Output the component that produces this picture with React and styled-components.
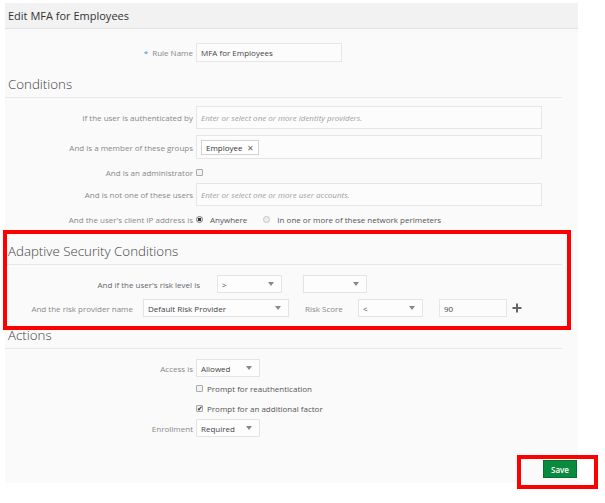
import styled, { createGlobalStyle } from "styled-components";

const GlobalStyle = createGlobalStyle`
  body {
    margin: 0;
    background: #ffffff;
    font-family: "Open Sans", "Noto Sans", sans-serif;
  }
`;

const Page = styled.div`
  position: relative;
  width: 605px;
  height: 503px;
  padding: 3px 0 0 5px;
  box-sizing: border-box;
`;

const Panel = styled.div`
  width: 573px;
  height: 480px;
  background: #fafafa;
  display: flex;
  flex-direction: column;
`;

const Header = styled.div`
  height: 25px;
  background: #f2f2f2;
  border-bottom: 1px solid #e2e2e2;
  display: flex;
  align-items: center;
  padding-left: 3px;
  font-size: 11px;
  color: #333;
`;

const Heading = styled.div`
  box-sizing: border-box;
  width: 557px;
  height: ${(p) => p.$h || 26}px;
  margin-top: ${(p) => p.$mt || 0}px;
  padding-left: 3px;
  border-bottom: 1px solid #e8e8e8;
  display: flex;
  align-items: center;
  font-size: 13.3px;
  font-weight: 300;
  color: #444;
`;

const FormRow = styled.div`
  display: grid;
  grid-template-columns: 188px 1fr;
  column-gap: 3px;
  align-items: center;
  margin-top: ${(p) => p.$mt || 0}px;
  height: ${(p) => p.$h || 19}px;
`;

const Label = styled.span`
  text-align: right;
  font-size: 8px;
  color: #888;
  white-space: nowrap;
`;

const Required = styled.span`
  color: #3a8bd0;
  margin-right: 4px;
`;

const TextBox = styled.div`
  box-sizing: border-box;
  width: ${(p) => p.$w}px;
  height: ${(p) => p.$h || 19}px;
  background: #fcfcfc;
  border: 1px solid #e6e6e6;
  display: flex;
  align-items: center;
  gap: 4px;
  padding: 0 4px;
  font-size: 8px;
  color: #444;
  white-space: nowrap;
`;

const Placeholder = styled.span`
  font-style: italic;
  color: #a0a0a0;
`;

const Chip = styled.span`
  display: inline-flex;
  align-items: center;
  gap: 4px;
  height: 15px;
  padding: 0 4px;
  box-sizing: border-box;
  border: 1px solid #d2d2d2;
  background: #fff;
  font-size: 8px;
  color: #333;
`;

const ChipClose = styled.span`
  font-size: 8px;
  color: #666;
`;

const Select = styled.div`
  box-sizing: border-box;
  width: ${(p) => p.$w}px;
  height: 18px;
  background: #fdfdfd;
  border: 1px solid #e4e4e4;
  display: flex;
  align-items: center;
  padding: 0 7px 0 4px;
  font-size: 8px;
  color: #444;
  white-space: nowrap;
  &::after {
    content: "";
    margin-left: auto;
    border-left: 3px solid transparent;
    border-right: 3px solid transparent;
    border-top: 4px solid #888;
  }
`;

const Box = styled.span`
  display: inline-flex;
  align-items: center;
  justify-content: center;
  width: 7px;
  height: 7px;
  box-sizing: border-box;
  border: 1px solid #aaa;
  border-radius: 1px;
  background: #f2f2f2;
  font-size: 7px;
  line-height: 1;
  color: #333;
`;

const Radio = styled.span`
  display: inline-block;
  width: 7px;
  height: 7px;
  box-sizing: border-box;
  border-radius: 50%;
  border: 1px solid ${(p) => (p.$on ? "#777" : "#c4c4c4")};
  background: ${(p) => (p.$on ? "radial-gradient(circle, #333 45%, #eee 50%)" : "#eee")};
`;

const Inline = styled.div`
  display: flex;
  align-items: center;
  gap: ${(p) => p.$gap || 4}px;
  font-size: 8px;
  color: #555;
  white-space: nowrap;
`;

const Option = styled.span`
  margin-right: ${(p) => p.$mr || 0}px;
`;

const RiskRow = styled.div`
  display: flex;
  align-items: center;
  height: 18px;
  margin-top: ${(p) => p.$mt || 0}px;
`;

const RiskLabel = styled(Label)`
  width: ${(p) => p.$w}px;
  margin-right: ${(p) => p.$mr}px;
  text-align: ${(p) => p.$align || "right"};
  color: ${(p) => p.$color || "#888"};
`;

const Spacer = styled.div`
  width: ${(p) => p.$w}px;
  flex: none;
`;

const Footer = styled.div`
  display: flex;
  justify-content: flex-end;
  margin-top: auto;
  padding: 0 1px 5px 0;
`;

const SaveButton = styled.button`
  width: 34px;
  height: 18px;
  padding: 0;
  border: 1px solid #067030;
  background: #0a8a3c;
  color: #fff;
  font-family: inherit;
  font-size: 8px;
  font-weight: 600;
`;

const Callout = styled.div`
  position: absolute;
  left: ${(p) => p.$x}px;
  top: ${(p) => p.$y}px;
  width: ${(p) => p.$w}px;
  height: ${(p) => p.$h}px;
  box-sizing: border-box;
  border: 4px solid #ff0000;
  pointer-events: none;
`;

const Plus = () => (
  <svg width="10" height="10" viewBox="0 0 10 10">
    <path d="M5 0.5v9M0.5 5h9" stroke="#666" strokeWidth="2" />
  </svg>
);

export default function App() {
  return (
    <>
      <GlobalStyle />
      <Page>
        <Panel>
          <Header>Edit MFA for Employees</Header>

          <FormRow $mt={14}>
            <Label>
              <Required>*</Required>Rule Name
            </Label>
            <TextBox $w={146}>MFA for Employees</TextBox>
          </FormRow>

          <Heading $mt={8} $h={28}>Conditions</Heading>

          <FormRow $mt={8} $h={23}>
            <Label>If the user is authenticated by</Label>
            <TextBox $w={346} $h={23}>
              <Placeholder>Enter or select one or more identity providers.</Placeholder>
            </TextBox>
          </FormRow>
          <FormRow $mt={6} $h={24}>
            <Label>And is a member of these groups</Label>
            <TextBox $w={346} $h={24}>
              <Chip>
                Employee <ChipClose>✕</ChipClose>
              </Chip>
            </TextBox>
          </FormRow>
          <FormRow $mt={8} $h={8}>
            <Label>And is an administrator</Label>
            <Inline>
              <Box />
            </Inline>
          </FormRow>
          <FormRow $mt={8} $h={23}>
            <Label>And is not one of these users</Label>
            <TextBox $w={346} $h={23}>
              <Placeholder>Enter or select one or more user accounts.</Placeholder>
            </TextBox>
          </FormRow>
          <FormRow $mt={7} $h={12}>
            <Label>And the user's client IP address is</Label>
            <Inline $gap={7}>
              <Radio $on />
              <Option $mr={9}>Anywhere</Option>
              <Radio />
              <Option>In one or more of these network perimeters</Option>
            </Inline>
          </FormRow>

          <Heading $mt={12} $h={28}>Adaptive Security Conditions</Heading>

          <RiskRow $mt={10}>
            <RiskLabel $w={195} $mr={17} $color="#666">
              And if the user's risk level is
            </RiskLabel>
            <Select $w={65}>&gt;</Select>
            <Spacer $w={21} />
            <Select $w={64} />
          </RiskRow>
          <RiskRow $mt={6}>
            <RiskLabel $w={128} $mr={10}>
              And the risk provider name
            </RiskLabel>
            <Select $w={146}>Default Risk Provider</Select>
            <Spacer $w={16} />
            <RiskLabel $w={53} $mr={0} $align="left">
              Risk Score
            </RiskLabel>
            <Select $w={65}>&lt;</Select>
            <Spacer $w={16} />
            <TextBox $w={68} $h={18}>90</TextBox>
            <Spacer $w={5} />
            <Plus />
          </RiskRow>

          <Heading $mt={5} $h={27}>Actions</Heading>

          <FormRow $mt={10} $h={18}>
            <Label>Access is</Label>
            <Select $w={64}>Allowed</Select>
          </FormRow>
          <FormRow $mt={6} $h={10}>
            <span />
            <Inline>
              <Box />
              Prompt for reauthentication
            </Inline>
          </FormRow>
          <FormRow $mt={10} $h={10}>
            <span />
            <Inline>
              <Box>✔</Box>
              Prompt for an additional factor
            </Inline>
          </FormRow>
          <FormRow $mt={6} $h={18}>
            <Label>Enrollment</Label>
            <Select $w={64}>Required</Select>
          </FormRow>

          <Footer>
            <SaveButton>Save</SaveButton>
          </Footer>
        </Panel>

        <Callout $x={3} $y={230} $w={568} $h={100} />
        <Callout $x={517} $y={455} $w={81} $h={34} />
      </Page>
    </>
  );
}
